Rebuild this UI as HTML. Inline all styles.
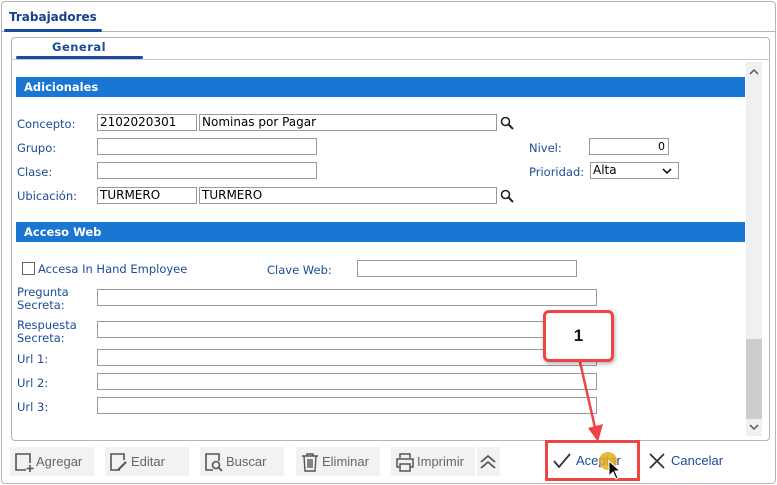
<!DOCTYPE html>
<html><head><meta charset="utf-8"><style>
*{box-sizing:border-box;margin:0;padding:0}
body{width:777px;height:485px;background:#fff;font-family:"DejaVu Sans","Liberation Sans",sans-serif;font-size:11px;color:#1a4c99;position:relative;overflow:hidden}
.a{position:absolute}
.inp{position:absolute;border:1px solid #999;background:#fff;height:17px;font-size:12px;color:#000;padding-left:2px;line-height:15px;font-family:"DejaVu Sans",sans-serif}
.lbl{position:absolute;font-size:11.5px;color:#1a4c99}
.hdr{position:absolute;left:16px;width:729px;height:20px;background:#1976d2;color:#fff;font-weight:bold;font-size:11.5px;padding-left:8px;line-height:20px}
.btn{position:absolute;top:447px;height:29px;background:#f2f2f2;color:#666;font-size:13px;line-height:29px;font-family:"Liberation Sans",sans-serif}
.btn svg{position:absolute;left:3px;top:4px}
.btn span{position:absolute;left:26px}
</style></head><body>
<div class="a" style="left:1px;top:1px;width:775px;height:483px;border:1px solid #b5b5b5;border-radius:4px"></div>
<div class="a" style="left:1px;top:31px;width:775px;border-top:1px solid #b5b5b5"></div>
<div class="a" style="left:9px;top:10px;font-weight:bold;font-size:12px;color:#17418c">Trabajadores</div>
<div class="a" style="left:4px;top:29px;width:98px;height:3px;background:#1a4c99;border-radius:2px"></div>
<div class="a" style="left:11px;top:37px;width:759px;height:404px;border:1px solid #b5b5b5;border-radius:4px"></div>
<div class="a" style="left:11px;top:59px;width:759px;border-top:1px solid #c8c8c8"></div>
<div class="a" style="left:52px;top:40px;font-weight:bold;font-size:11.5px;color:#1a4c99;letter-spacing:0.5px">General</div>
<div class="a" style="left:16px;top:56px;width:127px;height:3px;background:#1a4c99;border-radius:2px"></div>
<div class="a" style="left:746px;top:62px;width:16px;height:374px;background:#f0f0f0"></div>
<div class="a" style="left:746px;top:339px;width:16px;height:80px;background:#cdcdcd"></div>
<svg class="a" style="left:749px;top:68px" width="10" height="8"><path d="M1 6L5 2L9 6" stroke="#555" stroke-width="1.5" fill="none"/></svg>
<svg class="a" style="left:749px;top:423px" width="10" height="8"><path d="M1 2L5 6L9 2" stroke="#555" stroke-width="1.5" fill="none"/></svg>

<div class="hdr" style="top:77px">Adicionales</div>
<div class="lbl" style="left:17px;top:117px">Concepto:</div>
<div class="inp" style="left:97px;top:114px;width:100px">2102020301</div>
<div class="inp" style="left:199px;top:114px;width:298px">Nominas por Pagar</div>
<svg class="a" style="left:500px;top:116px" width="14" height="14"><circle cx="5.5" cy="5.5" r="4" stroke="#222" stroke-width="1.6" fill="none"/><path d="M8.5 8.5L13 13" stroke="#222" stroke-width="2"/></svg>
<div class="lbl" style="left:17px;top:141px">Grupo:</div>
<div class="inp" style="left:97px;top:138px;width:220px"></div>
<div class="lbl" style="left:529px;top:141px">Nivel:</div>
<div class="inp" style="left:589px;top:138px;width:80px;text-align:right;padding-right:3px;font-size:11px">0</div>
<div class="lbl" style="left:17px;top:165px">Clase:</div>
<div class="inp" style="left:97px;top:162px;width:220px"></div>
<div class="lbl" style="left:529px;top:165px">Prioridad:</div>
<div class="inp" style="left:590px;top:162px;width:89px">Alta</div>
<svg class="a" style="left:662px;top:168px" width="10" height="7"><path d="M1 1L5 5L9 1" stroke="#000" stroke-width="1.5" fill="none"/></svg>
<div class="lbl" style="left:17px;top:189px">Ubicación:</div>
<div class="inp" style="left:97px;top:187px;width:100px">TURMERO</div>
<div class="inp" style="left:199px;top:187px;width:298px">TURMERO</div>
<svg class="a" style="left:500px;top:189px" width="14" height="14"><circle cx="5.5" cy="5.5" r="4" stroke="#222" stroke-width="1.6" fill="none"/><path d="M8.5 8.5L13 13" stroke="#222" stroke-width="2"/></svg>

<div class="hdr" style="top:222px">Acceso Web</div>
<div class="a" style="left:22px;top:262px;width:13px;height:13px;border:1px solid #666;background:#fff"></div>
<div class="lbl" style="left:38px;top:262px">Accesa In Hand Employee</div>
<div class="lbl" style="left:267px;top:263px">Clave Web:</div>
<div class="inp" style="left:357px;top:260px;width:220px"></div>
<div class="lbl" style="left:17px;top:286px;line-height:13px">Pregunta<br>Secreta:</div>
<div class="inp" style="left:97px;top:289px;width:500px"></div>
<div class="lbl" style="left:17px;top:319px;line-height:13px">Respuesta<br>Secreta:</div>
<div class="inp" style="left:97px;top:321px;width:500px"></div>
<div class="lbl" style="left:17px;top:352px">Url 1:</div>
<div class="inp" style="left:97px;top:349px;width:500px"></div>
<div class="lbl" style="left:17px;top:376px">Url 2:</div>
<div class="inp" style="left:97px;top:373px;width:500px"></div>
<div class="lbl" style="left:17px;top:400px">Url 3:</div>
<div class="inp" style="left:97px;top:397px;width:500px"></div>

<div class="btn" style="left:10px;width:84px"><svg width="22" height="22"><path d="M13 19H3V3H17V12" stroke="#555" stroke-width="1.6" fill="none"/><path d="M17 14V21M13.5 17.5H20.5" stroke="#555" stroke-width="1.6"/></svg><span>Agregar</span></div>
<div class="btn" style="left:105px;width:84px"><svg width="22" height="22"><path d="M12 19H3V3H16V9" stroke="#555" stroke-width="1.6" fill="none"/><path d="M10 19L18 11" stroke="#555" stroke-width="2"/></svg><span>Editar</span></div>
<div class="btn" style="left:200px;width:84px"><svg width="22" height="22"><path d="M10 19H3V3H16V10" stroke="#555" stroke-width="1.6" fill="none"/><circle cx="13" cy="14" r="3.5" stroke="#555" stroke-width="1.6" fill="none"/><path d="M15.5 16.5L19 20" stroke="#555" stroke-width="1.8"/></svg><span>Buscar</span></div>
<div class="btn" style="left:296px;width:84px"><svg width="22" height="22"><path d="M3 5H19M8 5V3H14V5M5 5L6 20H16L17 5M9 8V17M11 8V17M13 8V17" stroke="#555" stroke-width="1.4" fill="none"/></svg><span>Eliminar</span></div>
<div class="btn" style="left:391px;width:84px"><svg width="22" height="22"><path d="M6 7V3H16V7M6 16H3V8H19V16H16M6 13H16V20H6Z" stroke="#555" stroke-width="1.5" fill="none"/></svg><span>Imprimir</span></div>
<div class="btn" style="left:477px;width:23px"><svg width="20" height="22" style="left:1px"><path d="M3 11L10 5L17 11M3 17L10 11L17 17" stroke="#555" stroke-width="1.8" fill="none"/></svg></div>

<div class="a" style="left:545px;top:440px;width:95px;height:41px;border:3px solid #f04444"></div>
<svg class="a" style="left:552px;top:452px" width="20" height="18"><path d="M2 9L7 15L18 2" stroke="#333" stroke-width="1.8" fill="none"/></svg>
<div class="a" style="left:576px;top:453px;font-size:13px;color:#1a4c99;font-family:'Liberation Sans',sans-serif">Aceptar</div>
<div class="a" style="left:599px;top:452px;width:18px;height:18px;border-radius:50%;background:rgba(230,170,30,0.85)"></div>
<svg class="a" style="left:608px;top:460px" width="14" height="22"><path d="M1 1V16L5 12L8 19L10 18L7 11H12Z" fill="#000" stroke="#fff" stroke-width="1"/></svg>
<svg class="a" style="left:648px;top:452px" width="18" height="18"><path d="M2 2L16 16M16 2L2 16" stroke="#333" stroke-width="1.8"/></svg>
<div class="a" style="left:671px;top:453px;font-size:13px;color:#1a4c99;font-family:'Liberation Sans',sans-serif">Cancelar</div>

<svg class="a" style="left:530px;top:300px" width="120" height="145"><path d="M50 62L66 132" stroke="#f04444" stroke-width="2.5"/><path d="M58 128L68 142L73 124Z" fill="#f04444"/></svg>
<div class="a" style="left:543px;top:310px;width:71px;height:52px;border:3px solid #f04444;border-radius:6px;background:#fff;box-shadow:1px 2px 4px rgba(0,0,0,0.3);text-align:center;line-height:46px;font-family:'Liberation Sans',sans-serif;font-weight:bold;font-size:17px;color:#111">1</div>
</body></html>
